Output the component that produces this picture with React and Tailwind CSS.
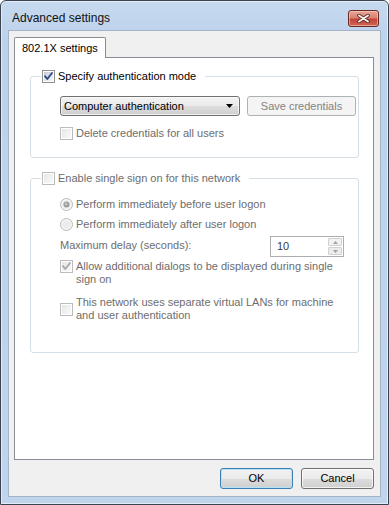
import React from "react";

const btnFace =
  "bg-[linear-gradient(to_bottom,#f2f2f2_0%,#ebebeb_50%,#dddddd_51%,#cfcfcf_100%)]";

function CheckBox({ checked, disabled }) {
  const border = disabled ? "#bcbcbc" : "#8e8f8f";
  const mark = disabled ? "#a9a9a9" : "#2f4a8a";
  return (
    <svg width="13" height="13" viewBox="0 0 13 13" className="shrink-0">
      <defs>
        <linearGradient id="cbOn" x1="0" y1="0" x2="1" y2="1">
          <stop offset="0" stopColor="#c6cbd2" />
          <stop offset="1" stopColor="#f7f8f9" />
        </linearGradient>
        <linearGradient id="cbOff" x1="0" y1="0" x2="1" y2="1">
          <stop offset="0" stopColor="#e6e6e6" />
          <stop offset="1" stopColor="#fafafa" />
        </linearGradient>
      </defs>
      <rect x="0.5" y="0.5" width="12" height="12" fill="#fff" stroke={border} />
      <rect x="2" y="2" width="9" height="9" fill={disabled ? "url(#cbOff)" : "url(#cbOn)"} />
      {checked && (
        <path
          d="M3 6.2 L5.3 9 L10 3"
          stroke={mark}
          strokeWidth="1.9"
          fill="none"
          strokeLinecap="round"
          strokeLinejoin="round"
        />
      )}
    </svg>
  );
}

function Radio({ checked }) {
  return (
    <svg width="13" height="13" viewBox="0 0 13 13" className="shrink-0">
      <circle cx="6.5" cy="6.5" r="6" fill="#f7f7f7" stroke="#b9b9b9" />
      <circle cx="6.5" cy="6.5" r="4.3" fill="#ececec" />
      {checked && (
        <>
          <circle cx="6.5" cy="6.5" r="3" fill="#9d9d9d" />
          <circle cx="6" cy="6" r="1.3" fill="#c9c9c9" />
        </>
      )}
    </svg>
  );
}

function Arrow({ up, color = "#000", w = 7, h = 4 }) {
  return (
    <svg width={w} height={h} viewBox={`0 0 ${w} ${h}`}>
      <path d={up ? `M0 ${h}H${w}L${w / 2} 0Z` : `M0 0H${w}L${w / 2} ${h}Z`} fill={color} />
    </svg>
  );
}

export default function App() {
  return (
    <div className="w-[389px] h-[505px] bg-white font-['Liberation_Sans',Arial,sans-serif] text-[11px] text-black">
      <div className="h-full flex flex-col rounded-t-[6px] border border-[#3b4350] bg-[linear-gradient(to_bottom,#c6d9ef,#bcd2eb_40px,#c0d5ec)] shadow-[inset_0_0_0_1px_rgba(255,255,255,0.55)]">
        {/* title bar */}
        <div className="h-[29px] shrink-0 flex items-start justify-between pl-[11px] pr-[9px]">
          <span className="mt-[10px] text-[12px] leading-[15px] text-[#111]">Advanced settings</span>
          <div className="mt-[9px] w-[31px] h-[17px] rounded-[3px] border border-[#6b2a22] bg-[linear-gradient(to_bottom,#e8a596_0%,#d88373_45%,#c2443a_55%,#d06656_100%)] shadow-[inset_0_0_0_1px_rgba(255,220,210,0.5)] flex items-center justify-center">
            <svg width="13" height="9" viewBox="0 0 13 9">
              <path d="M2 1.5 L11 7.5 M11 1.5 L2 7.5" stroke="#5a2a24" strokeWidth="3.6" strokeLinecap="round" />
              <path d="M2 1.5 L11 7.5 M11 1.5 L2 7.5" stroke="#f6f1f0" strokeWidth="1.9" strokeLinecap="round" />
            </svg>
          </div>
        </div>

        {/* client area */}
        <div className="flex-1 mx-[7px] mb-[7px] border border-[#a3b4ca] bg-[#f0f0f0] flex flex-col">
          <div className="ml-[5px] mt-[6px] -mb-px relative z-10 w-[92px] h-[21px] border border-b-0 border-[#898c95] rounded-t-[2px] bg-white pl-[7px] leading-[20px]">
            802.1X settings
          </div>

          <div className="ml-[5px] mr-[6px] h-[403px] border border-[#898c95] bg-white">
            <fieldset className="ml-[15px] mr-[14px] mt-[12px] border border-[#d5dfe5] rounded-[3px]">
              <legend className="ml-[10px] pl-[1px] pr-[9px]">
                <span className="flex items-center gap-[3px] h-[13px] leading-[13px]">
                  <CheckBox checked />
                  <span>Specify authentication mode</span>
                </span>
              </legend>
              <div className="pl-[29px] pr-[2px] pb-[17px]">
                <div className="mt-[13px] flex gap-[7px]">
                  <div className={`w-[180px] h-[20px] rounded-[3px] border border-[#707070] ${btnFace} shadow-[inset_0_0_0_1px_rgba(255,255,255,0.7)] flex items-center justify-between pl-[3px] pr-[6px]`}>
                    <span>Computer authentication</span>
                    <Arrow />
                  </div>
                  <div className="w-[109px] h-[20px] rounded-[3px] border border-[#adb2b5] bg-[#f4f4f4] text-[#838383] flex items-center justify-center">
                    Save credentials
                  </div>
                </div>
                <div className="mt-[11px] flex items-center gap-[3px] h-[13px] leading-[13px] text-[#6d6d6d]">
                  <CheckBox disabled />
                  <span>Delete credentials for all users</span>
                </div>
              </div>
            </fieldset>

            <fieldset className="ml-[15px] mr-[14px] mt-[14px] border border-[#d5dfe5] rounded-[3px] text-[#6d6d6d]">
              <legend className="ml-[10px] pl-[1px] pr-[9px]">
                <span className="flex items-center gap-[3px] h-[13px] leading-[13px]">
                  <CheckBox disabled />
                  <span>Enable single sign on for this network</span>
                </span>
              </legend>
              <div className="pl-[29px] pr-[14px] pb-[30px]">
                <div className="mt-[13px] flex items-center gap-[3px] h-[13px] leading-[13px]">
                  <Radio checked />
                  <span>Perform immediately before user logon</span>
                </div>
                <div className="mt-[7px] flex items-center gap-[3px] h-[13px] leading-[13px]">
                  <Radio />
                  <span>Perform immediately after user logon</span>
                </div>
                <div className="mt-[5px] h-[21px] flex items-center justify-between">
                  <span className="mt-[-3px]">Maximum delay (seconds):</span>
                  <div className="w-[74px] h-[21px] border border-[#abadb3] bg-white flex items-center">
                    <span className="flex-1 pl-[6px] text-[#3a3a3a]">10</span>
                    <div className="w-[14px] h-[17px] mr-[1px] flex flex-col gap-px">
                      <div className="flex-1 rounded-[1px] border border-[#cfd1d4] bg-[#f2f2f2] flex items-center justify-center">
                        <Arrow up w={5} h={3} color="#a0a0a0" />
                      </div>
                      <div className="flex-1 rounded-[1px] border border-[#cfd1d4] bg-[#ececec] flex items-center justify-center">
                        <Arrow w={5} h={3} color="#a0a0a0" />
                      </div>
                    </div>
                  </div>
                </div>
                <div className="mt-[3px] flex items-start gap-[3px] leading-[13px]">
                  <CheckBox checked disabled />
                  <span className="whitespace-nowrap">
                    Allow additional dialogs to be displayed during single
                    <br />
                    sign on
                  </span>
                </div>
                <div className="mt-[10px] flex items-center gap-[3px] leading-[13px]">
                  <CheckBox disabled />
                  <span className="whitespace-nowrap">
                    This network uses separate virtual LANs for machine
                    <br />
                    and user authentication
                  </span>
                </div>
              </div>
            </fieldset>
          </div>

          <div className="mt-[8px] mr-[6px] flex justify-end gap-[8px]">
            <div className={`w-[73px] h-[21px] rounded-[3px] border border-[#3c7fb1] ${btnFace} shadow-[inset_0_0_0_1px_#b8e2f8] flex items-center justify-center`}>
              OK
            </div>
            <div className={`w-[73px] h-[21px] rounded-[3px] border border-[#707070] ${btnFace} shadow-[inset_0_0_0_1px_rgba(255,255,255,0.7)] flex items-center justify-center`}>
              Cancel
            </div>
          </div>
        </div>
      </div>
    </div>
  );
}
